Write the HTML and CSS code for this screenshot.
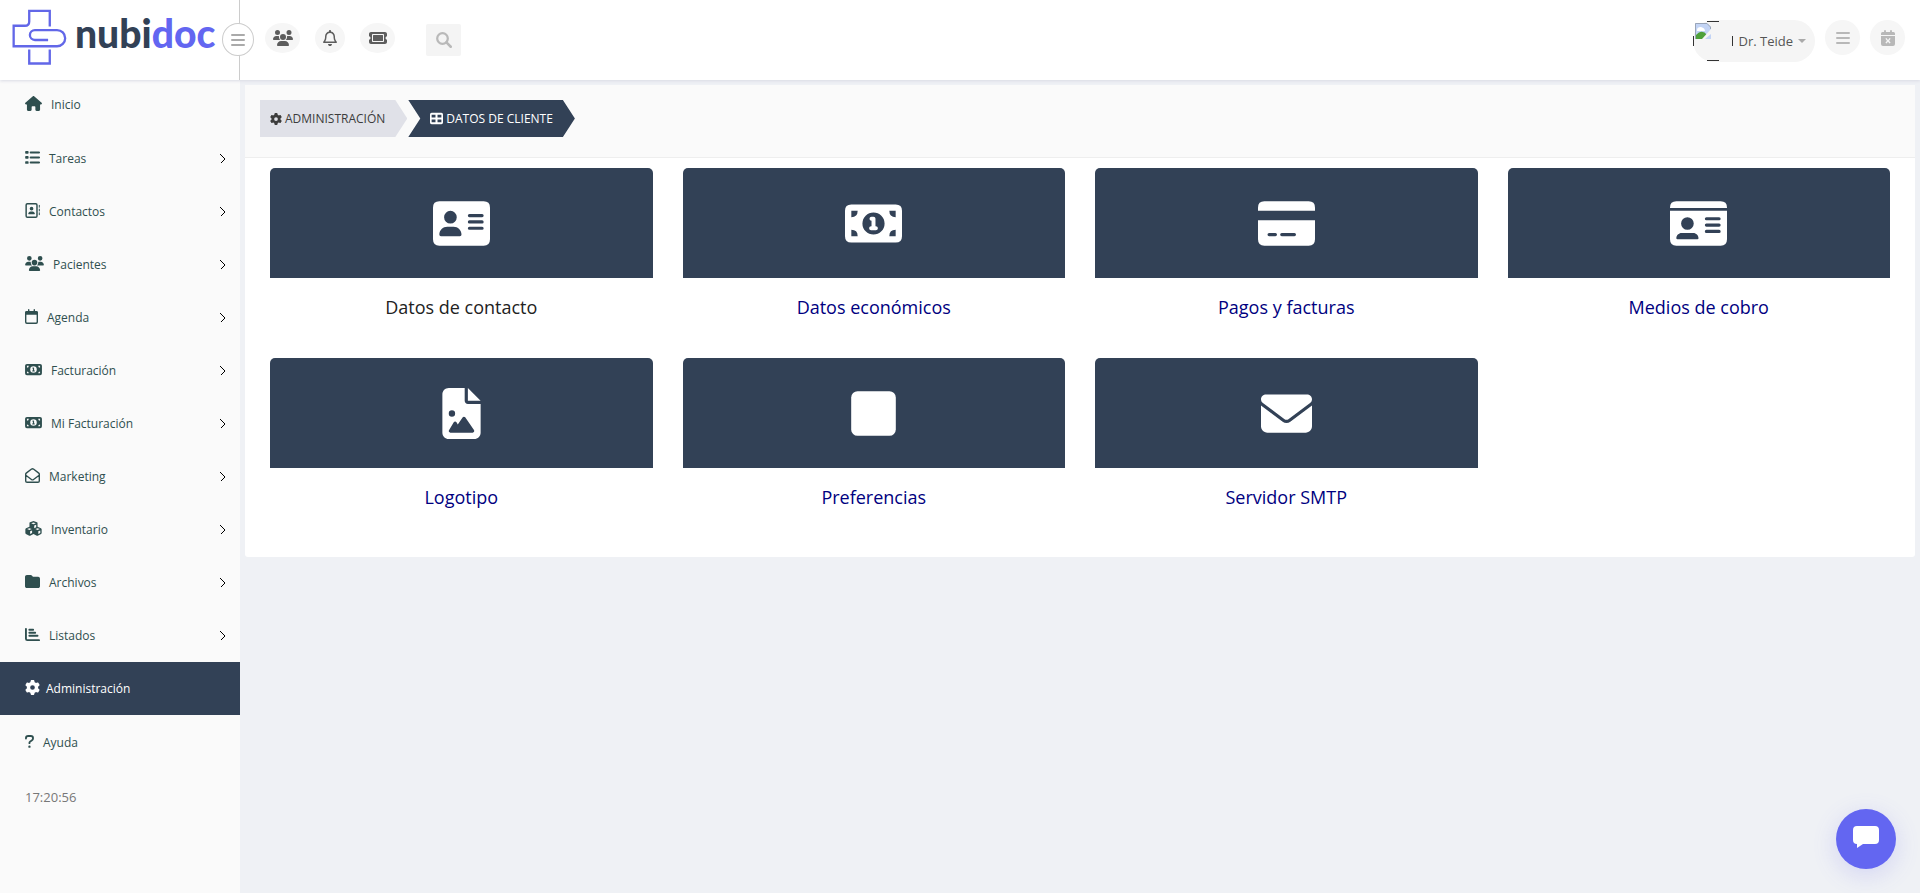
FILE: index.html
```html
<!DOCTYPE html>
<html lang="es">
<head>
<meta charset="utf-8">
<title>nubidoc - Datos de cliente</title>
<link rel="stylesheet" href="styles.css">
</head>
<body>
<svg class="sprite" aria-hidden="true">
  <symbol id="house" viewBox="0 0 576 512"><path d="M575.8 255.5c0 18-15 32.1-32 32.1l-32 0 .7 160.2c0 2.7-.2 5.4-.5 8.1V472c0 22.1-17.9 40-40 40H392c-22.1 0-40-17.9-40-40V384c0-17.7-14.3-32-32-32H256c-17.7 0-32 14.3-32 32v88c0 22.1-17.9 40-40 40H104c-22.1 0-40-17.9-40-40V287.6H32c-18 0-32-14-32-32.1c0-9 3-17 10-24L266.4 8c7-7 15-8 22-8s15 2 21 7L564.8 231.5c8 7 12 15 11 24z"/></symbol>
  <symbol id="list" viewBox="0 0 512 512"><path d="M30 36h68q24 0 24 24v44q0 24-24 24H30q-24 0-24-24V60q0-24 24-24zM30 208h68q24 0 24 24v44q0 24-24 24H30q-24 0-24-24v-44q0-24 24-24zM30 380h68q24 0 24 24v44q0 24-24 24H30q-24 0-24-24v-44q0-24 24-24z"/><path class="line" stroke-width="66" d="M192 84h288M192 256h288M192 428h288"/></symbol>
  <symbol id="book" viewBox="0 0 512 512"><rect class="line" stroke-width="50" x="39" y="25" width="370" height="462" rx="42"/><circle cx="224" cy="192" r="62"/><path d="M112 368c0-44 36-80 80-80h64c44 0 80 36 80 80q0 16-16 16H128q-16 0-16-16z"/><path class="line" stroke-width="34" d="M488 80v64M488 208v64M488 336v64"/></symbol>
  <symbol id="users" viewBox="0 0 640 512"><path d="M144 0a80 80 0 1 1 0 160A80 80 0 1 1 144 0zM512 0a80 80 0 1 1 0 160A80 80 0 1 1 512 0zM0 298.7C0 239.8 47.8 192 106.7 192h42.7c15.9 0 31 3.5 44.6 9.7c-1.3 7.2-1.9 14.7-1.9 22.3c0 38.2 16.8 72.5 43.3 96H21.3C9.6 320 0 310.4 0 298.7zM405.3 320c26.6-23.5 43.3-57.8 43.3-96c0-7.6-.7-15-1.9-22.3c13.6-6.3 28.7-9.7 44.6-9.7h42.7C592.2 192 640 239.8 640 298.7c0 11.8-9.6 21.3-21.3 21.3H405.3zM224 224a96 96 0 1 1 192 0 96 96 0 1 1 -192 0zM128 485.3C128 411.7 187.7 352 261.3 352H378.7C452.3 352 512 411.7 512 485.3c0 14.7-11.9 26.7-26.7 26.7H154.7c-14.7 0-26.7-11.9-26.7-26.7z"/></symbol>
  <symbol id="calendar" viewBox="0 0 448 512"><rect class="line" stroke-width="48" x="24" y="88" width="400" height="400" rx="40"/><path d="M0 192v-64q0-64 64-64h320q64 0 64 64v64z"/><path class="line" stroke-width="48" d="M128 24v64M320 24v64"/></symbol>
  <symbol id="calendar-x" viewBox="0 0 448 512"><path fill-rule="evenodd" d="M0 192h448v256q0 64-64 64H64q-64 0-64-64zM0 160v-48q0-48 48-48h352q48 0 48 48v48zM140 280l50 64-50 64 34 26 50-62 50 62 34-26-50-64 50-64-34-26-50 62-50-62z"/><path class="line" stroke-width="60" d="M128 32v60M320 32v60"/></symbol>
  <symbol id="money" viewBox="0 0 576 512"><path fill-rule="evenodd" d="M64 64h448q64 0 64 64v256q0 64-64 64H64q-64 0-64-64V128q0-64 64-64zM64 192q64 0 64-64H64zM64 320v64h64q0-64-64-64zM512 192v-64h-64q0 64 64 64zM512 320q-64 0-64 64h64zM288 144a112 112 0 1 0 0 224 112 112 0 1 0 0-224z"/><path d="M248 208c0-11 9-20 20-20h20c11 0 20 9 20 20v76h4c11 0 20 9 20 20s-9 20-20 20h-48c-11 0-20-9-20-20s9-20 20-20h4v-56c-11 0-20-9-20-20z"/></symbol>
  <symbol id="open-mail" viewBox="0 0 512 512"><path class="line" stroke-width="48" d="M24 208v232q0 48 48 48h368q48 0 48-48V208q0-20-18-34L288 36q-32-22-64 0L42 174q-18 14-18 34zM28 248l192 144q36 26 72 0l192-144"/></symbol>
  <symbol id="cubes" viewBox="0 0 576 512"><path fill-rule="evenodd" d="M288 0l118 44q20 8 20 28v128l116 44q24 10 24 34v132q0 22-20 32l-112 58q-16 8-32 0l-114-60-114 60q-16 8-32 0L30 442q-20-10-20-32V278q0-24 24-34l116-44V72q0-20 20-28zM288 50l-78 30 78 32 78-32zM312 152v92l68-28v-92zM148 246l-78 30 78 32 78-32zM172 350v92l68-36v-84zM428 246l-78 30 78 32 78-32zM452 350v92l68-36v-84z"/></symbol>
  <symbol id="folder" viewBox="0 0 512 512"><path d="M64 480H448c35 0 64-29 64-64V160c0-35-29-64-64-64H288c-10 0-20-5-26-13L243 58C231 42 212 32 192 32H64C29 32 0 61 0 96V416c0 35 29 64 64 64z"/></symbol>
  <symbol id="chart" viewBox="0 0 512 512"><path class="line" stroke-width="64" d="M32 62v338q0 50 50 50h398M148 92h130M148 196h200M148 300h280"/></symbol>
  <symbol id="gear" viewBox="0 0 512 512"><path d="M495.9 166.6c3.2 8.7 .5 18.4-6.4 24.6l-43.3 39.4c1.1 8.3 1.7 16.8 1.7 25.4s-.6 17.1-1.7 25.4l43.3 39.4c6.9 6.2 9.6 15.9 6.4 24.6c-4.4 11.9-9.7 23.3-15.8 34.3l-4.7 8.1c-6.6 11-14 21.4-22.1 31.2c-5.9 7.2-15.7 9.6-24.5 6.8l-55.7-17.7c-13.4 10.3-28.2 18.9-44 25.4l-12.5 57.1c-2 9.1-9 16.3-18.2 17.8c-13.8 2.3-28 3.5-42.5 3.5s-28.7-1.2-42.5-3.5c-9.2-1.5-16.2-8.7-18.2-17.8l-12.5-57.1c-15.8-6.5-30.6-15.1-44-25.4L83.1 425.9c-8.8 2.8-18.6 .3-24.5-6.8c-8.1-9.8-15.5-20.2-22.1-31.2l-4.7-8.1c-6.1-11-11.4-22.4-15.8-34.3c-3.2-8.7-.5-18.4 6.4-24.6l43.3-39.4C64.6 273.1 64 264.6 64 256s.6-17.1 1.7-25.4L22.4 191.2c-6.9-6.2-9.6-15.9-6.4-24.6c4.4-11.9 9.7-23.3 15.8-34.3l4.7-8.1c6.6-11 14-21.4 22.1-31.2c5.9-7.2 15.7-9.6 24.5-6.8l55.7 17.7c13.4-10.3 28.2-18.9 44-25.4l12.5-57.1c2-9.1 9-16.3 18.2-17.8C227.3 1.2 241.5 0 256 0s28.7 1.2 42.5 3.5c9.2 1.5 16.2 8.7 18.2 17.8l12.5 57.1c15.8 6.5 30.6 15.1 44 25.4l55.7-17.7c8.8-2.8 18.6-.3 24.5 6.8c8.1 9.8 15.5 20.2 22.1 31.2l4.7 8.1c6.1 11 11.4 22.4 15.8 34.3zM256 336a80 80 0 1 0 0-160 80 80 0 1 0 0 160z"/></symbol>
  <symbol id="question" viewBox="0 0 320 512"><path class="line" stroke-width="66" d="M34 150v-10q0-80 80-80h90q82 0 82 84 0 50-46 78l-54 32q-28 18-28 46v14"/><circle cx="158" cy="440" r="42"/></symbol>
  <symbol id="bell" viewBox="0 0 448 512"><path d="M224 0c-17.7 0-32 14.3-32 32V51.2C119 66 64 130.6 64 208v25.4c0 45.4-15.5 89.5-43.8 124.9L5.3 377c-5.8 7.2-6.9 17.1-2.9 25.4S14.8 416 24 416H424c9.2 0 17.6-5.3 21.6-13.6s2.9-18.2-2.9-25.4l-14.9-18.6C399.5 322.9 384 278.8 384 233.4V208c0-77.4-55-142-128-156.8V32c0-17.7-14.3-32-32-32zm0 96c61.9 0 112 50.1 112 112v25.4c0 47.9 13.9 94.6 39.7 134.6H72.3C98.1 328 112 281.3 112 233.4V208c0-61.9 50.1-112 112-112zm64 352H160c0 17 6.7 33.3 18.7 45.3s28.3 18.7 45.3 18.7s33.3-6.7 45.3-18.7s18.7-28.3 18.7-45.3z"/></symbol>
  <symbol id="ticket" viewBox="0 0 576 512"><path fill-rule="evenodd" d="M64 64C28.7 64 0 92.7 0 128v64c0 8.8 7.4 15.7 15.7 18.6C34.5 217.1 48 235 48 256s-13.5 38.9-32.3 45.4C7.4 304.3 0 311.2 0 320v64c0 35.3 28.7 64 64 64H512c35.3 0 64-28.7 64-64V320c0-8.800-7.400-15.700-15.700-18.600C541.500 294.900 528 277 528 256s13.500-38.900 32.300-45.400c8.300-2.900 15.700-9.800 15.700-18.600V128c0-35.300-28.700-64-64-64H64zM96 160c0-17.700 14.300-32 32-32H448c17.700 0 32 14.300 32 32V352c0 17.700-14.300 32-32 32H128c-17.700 0-32-14.300-32-32zM144 160q-16 0-16 16v160q0 16 16 16h288q16 0 16-16V176q0-16-16-16z"/></symbol>
  <symbol id="search" viewBox="0 0 512 512"><circle class="line" stroke-width="72" cx="208" cy="208" r="170"/><path class="line" stroke-width="80" d="M334 334l138 138"/></symbol>
  <symbol id="bars" viewBox="0 0 448 512"><path class="line" stroke-width="64" d="M32 96h384M32 256h384M32 416h384"/></symbol>
  <symbol id="table" viewBox="0 0 512 512"><path fill-rule="evenodd" d="M64 32h384q64 0 64 64v320q0 64-64 64H64q-64 0-64-64V96q0-64 64-64zM64 106v108h152V106zM296 106v108h152V106zM64 298v108h152V298zM296 298v108h152V298z"/></symbol>
  <symbol id="contact-card" viewBox="0 0 576 512"><path fill-rule="evenodd" d="M64 32h448q64 0 64 64v320q0 64-64 64H64q-64 0-64-64V96q0-64 64-64zM176 128a64 64 0 1 0 0 128 64 64 0 1 0 0-128zM64 368q0 16 16 16h192q16 0 16-16c0-44-36-80-80-80h-64c-44 0-80 36-80 80zM368 160a16 16 0 1 0 0 32h128a16 16 0 1 0 0-32zM368 224a16 16 0 1 0 0 32h128a16 16 0 1 0 0-32zM368 288a16 16 0 1 0 0 32h128a16 16 0 1 0 0-32z"/></symbol>
  <symbol id="id-card" viewBox="0 0 576 512"><path fill-rule="evenodd" d="M0 96q0-64 64-64h448q64 0 64 64v4H0zM0 128h576v288q0 64-64 64H64q-64 0-64-64zM176 192a64 64 0 1 0 0 128 64 64 0 1 0 0-128zM64 405q0 11 11 11h202q11 0 11-11c0-29-24-53-53-53H117c-29 0-53 24-53 53zM368 192a16 16 0 1 0 0 32h128a16 16 0 1 0 0-32zM368 256a16 16 0 1 0 0 32h128a16 16 0 1 0 0-32zM368 320a16 16 0 1 0 0 32h128a16 16 0 1 0 0-32z"/></symbol>
  <symbol id="credit" viewBox="0 0 576 512"><path fill-rule="evenodd" d="M0 128V96q0-64 64-64h448q64 0 64 64v32zM0 224h576v192q0 64-64 64H64q-64 0-64-64zM112 352a16 16 0 1 0 0 32h64a16 16 0 1 0 0-32zM240 352a16 16 0 1 0 0 32h128a16 16 0 1 0 0-32z"/></symbol>
  <symbol id="file-image" viewBox="0 0 384 512"><path d="M64 0C28.7 0 0 28.7 0 64V448c0 35.3 28.7 64 64 64H320c35.3 0 64-28.7 64-64V160H256c-17.7 0-32-14.3-32-32V0H64zM256 0V128H384L256 0zM64 256a32 32 0 1 1 64 0 32 32 0 1 1 -64 0zm152 32c5.3 0 10.2 2.6 13.2 6.9l88 128c3.4 4.9 3.7 11.3 1 16.5s-8.2 8.6-14.2 8.6H80c-5.8 0-11.1-3.1-13.9-8.1s-2.8-11.2 .2-16.1l48-80c2.9-4.8 8.1-7.8 13.7-7.8s10.8 2.9 13.7 7.8l12.8 21.4 48.3-70.2c3-4.3 7.9-6.9 13.2-6.9z"/></symbol>
  <symbol id="square" viewBox="0 0 448 512"><rect y="32" width="448" height="448" rx="64"/></symbol>
  <symbol id="envelope" viewBox="0 0 512 512"><path d="M48 64C21.5 64 0 85.5 0 112c0 15.1 7.1 29.3 19.2 38.4L236.8 313.6c11.4 8.5 27 8.5 38.4 0L492.8 150.4c12.1-9.1 19.2-23.3 19.2-38.4c0-26.5-21.5-48-48-48H48zM0 176V384c0 35.3 28.7 64 64 64H448c35.3 0 64-28.7 64-64V176L294.4 339.2c-22.8 17.1-54 17.1-76.8 0L0 176z"/></symbol>
  <symbol id="chevron" viewBox="0 0 6 10"><path class="line chevron-line" d="M.5 .5L5 5L.5 9.5"/></symbol>
</svg>

<header class="topbar">
  <div class="brand">
    <a class="logo" href="#" aria-label="nubidoc">
      <svg class="logo-mark" viewBox="36 28 166 168" aria-hidden="true"><path d="M150 80V33H88V65Q88 78 75 78H41V140H172A24.500 24.500 0 0 0 172 91H105A15 15 0 0 0 105 121H145M88 150V192H150V150"/></svg>
      <span class="logo-text">nubi<span class="logo-accent">doc</span></span>
    </a>
    <button class="toggle" type="button" aria-label="Menú"><svg class="w14"><use href="#bars"/></svg></button>
  </div>
  <nav class="tools" aria-label="Accesos">
    <button class="round wide" type="button" aria-label="Pacientes"><svg class="w20"><use href="#users"/></svg></button>
    <button class="round" type="button" aria-label="Avisos"><svg class="w14"><use href="#bell"/></svg></button>
    <button class="round wide" type="button" aria-label="Tickets"><svg class="w18"><use href="#ticket"/></svg></button>
    <button class="search" type="button" aria-label="Buscar"><svg class="w16"><use href="#search"/></svg></button>
  </nav>
  <div class="account">
    <button class="user" type="button">
      <svg class="avatar" viewBox="0 0 40 42" aria-hidden="true"><path fill="#c3d4f5" d="M2 3h12l4 4v12H2z"/><path fill="#fff" d="M4 10q0-3 4-3 4 1 4 4H4z"/><path fill="#4fa13b" d="M2 19v-3q7-8 12-1l-3 4z"/><path fill="#f5f5f5" d="M18 9v5l-6 5H9z"/><path fill="none" stroke="#9aa5b8" d="M2.500 19V3.500H14L17.500 7v2"/><path stroke="#333" d="M14 1.500h12M14 40.500h12M.5 16v10M39.500 16v10"/></svg>
      <span>Dr. Teide</span>
      <span class="caret"></span>
    </button>
    <button class="round big" type="button" aria-label="Opciones"><svg class="w14"><use href="#bars"/></svg></button>
    <button class="round big" type="button" aria-label="Citas anuladas"><svg class="w14"><use href="#calendar-x"/></svg></button>
  </div>
</header>

<div class="layout">
  <aside class="sidebar">
    <nav class="menu" aria-label="Principal">
      <a class="item" href="#"><svg class="w17"><use href="#house"/></svg>Inicio</a>
      <a class="item" href="#"><svg class="w15"><use href="#list"/></svg>Tareas<svg class="chevron"><use href="#chevron"/></svg></a>
      <a class="item" href="#"><svg class="w15"><use href="#book"/></svg>Contactos<svg class="chevron"><use href="#chevron"/></svg></a>
      <a class="item" href="#"><svg class="w19"><use href="#users"/></svg>Pacientes<svg class="chevron"><use href="#chevron"/></svg></a>
      <a class="item" href="#"><svg class="w13"><use href="#calendar"/></svg>Agenda<svg class="chevron"><use href="#chevron"/></svg></a>
      <a class="item" href="#"><svg class="w17"><use href="#money"/></svg>Facturación<svg class="chevron"><use href="#chevron"/></svg></a>
      <a class="item" href="#"><svg class="w17"><use href="#money"/></svg>Mi Facturación<svg class="chevron"><use href="#chevron"/></svg></a>
      <a class="item" href="#"><svg class="w15"><use href="#open-mail"/></svg>Marketing<svg class="chevron"><use href="#chevron"/></svg></a>
      <a class="item" href="#"><svg class="w17"><use href="#cubes"/></svg>Inventario<svg class="chevron"><use href="#chevron"/></svg></a>
      <a class="item" href="#"><svg class="w15"><use href="#folder"/></svg>Archivos<svg class="chevron"><use href="#chevron"/></svg></a>
      <a class="item" href="#"><svg class="w15"><use href="#chart"/></svg>Listados<svg class="chevron"><use href="#chevron"/></svg></a>
      <a class="item active" href="#" aria-current="page"><svg class="w15"><use href="#gear"/></svg>Administración</a>
      <a class="item" href="#"><svg class="w9"><use href="#question"/></svg>Ayuda</a>
    </nav>
    <div class="clock">17:20:56</div>
  </aside>

  <main class="content">
    <section class="panel">
      <nav class="crumbs" aria-label="Ruta">
        <a class="crumb" href="#"><svg class="w12"><use href="#gear"/></svg>ADMINISTRACIÓN</a>
        <a class="crumb current" href="#" aria-current="page"><svg class="w13 h13"><use href="#table"/></svg>DATOS DE CLIENTE</a>
      </nav>
      <div class="tiles">
        <a class="tile selected" href="#"><span class="tile-icon"><svg><use href="#contact-card"/></svg></span><span class="tile-name">Datos de contacto</span></a>
        <a class="tile" href="#"><span class="tile-icon"><svg><use href="#money"/></svg></span><span class="tile-name">Datos económicos</span></a>
        <a class="tile" href="#"><span class="tile-icon"><svg><use href="#credit"/></svg></span><span class="tile-name">Pagos y facturas</span></a>
        <a class="tile" href="#"><span class="tile-icon"><svg><use href="#id-card"/></svg></span><span class="tile-name">Medios de cobro</span></a>
        <a class="tile" href="#"><span class="tile-icon"><svg><use href="#file-image"/></svg></span><span class="tile-name">Logotipo</span></a>
        <a class="tile" href="#"><span class="tile-icon"><svg><use href="#square"/></svg></span><span class="tile-name">Preferencias</span></a>
        <a class="tile" href="#"><span class="tile-icon"><svg><use href="#envelope"/></svg></span><span class="tile-name">Servidor SMTP</span></a>
      </div>
    </section>
  </main>
</div>

<button class="chat" type="button" aria-label="Chat"><svg viewBox="0 0 26 24" aria-hidden="true"><path d="M4 1h18q4 0 4 4v10q0 4-4 4H10l-6 4v-4q-4 0-4-4V5q0-4 4-4z"/></svg></button>
</body>
</html>
```
FILE: styles.css
```css
* { box-sizing: border-box; }

body {
  margin: 0;
  min-height: 100vh;
  display: flex;
  flex-direction: column;
  background: #eff1f5;
  color: #2f4f4f;
  font-family: "Open Sans", "Noto Sans", sans-serif;
  font-size: 12px;
}

button {
  border: 0;
  padding: 0;
  font: inherit;
  color: inherit;
  cursor: pointer;
}

a { color: inherit; text-decoration: none; }
svg { fill: currentColor; flex: none; display: block; }
.sprite { position: absolute; width: 0; height: 0; }
.line {
  fill: none;
  stroke: currentColor;
  stroke-linecap: round;
  stroke-linejoin: round;
}
.chevron-line { stroke-linecap: butt; shape-rendering: crispEdges; }

.w9 { width: 9px; height: 15px; }
.w12 { width: 12px; height: 12px; }
.w13 { width: 13px; height: 15px; }
.h13 { height: 13px; }
.w14 { width: 14px; height: 16px; }
.w15 { width: 15px; height: 15px; }
.w16 { width: 16px; height: 16px; }
.w17 { width: 17px; height: 15px; }
.w18 { width: 18px; height: 16px; }
.w19 { width: 19px; height: 15px; }
.w20 { width: 20px; height: 16px; }

/* Top bar */
.topbar {
  position: relative;
  z-index: 1;
  display: flex;
  height: 80px;
  background: #fff;
  box-shadow: 0 1px 3px #d9dae4;
}
.brand {
  position: relative;
  width: 240px;
  padding: 9px 0 0 12px;
  border-right: 1px solid #ccc;
}
.logo { display: flex; gap: 8px; }
.logo-mark {
  width: 55px;
  height: 56px;
  fill: none;
  stroke: #6267e8;
  stroke-width: 7;
}
.logo-text {
  padding-top: 4px;
  color: #324156;
  font: 900 39px/40px Lato, sans-serif;
}
.logo-accent { color: #6366f1; }
.toggle {
  position: absolute;
  top: 23px;
  right: -15px;
  width: 32px;
  height: 33px;
  display: grid;
  place-items: center;
  border: 1px solid #ccc;
  border-radius: 50%;
  background: #fff;
  color: #aaa;
}
.tools {
  display: flex;
  gap: 15px;
  padding: 23px 0 0 25px;
  color: #5d5d5d;
}
.round {
  width: 30px;
  height: 30px;
  display: grid;
  place-items: center;
  border-radius: 50%;
  background: #f6f6f6;
}
.wide { width: 35px; }
.big { width: 35px; height: 35px; color: #b8b8b8; }
.search {
  width: 35px;
  height: 32px;
  margin: 1px 0 0 16px;
  display: grid;
  place-items: center;
  border-radius: 2px;
  background: #f4f4f4;
  color: #b9b9b9;
}
.account {
  display: flex;
  align-items: flex-start;
  gap: 10px;
  margin-left: auto;
  padding: 20px 15px 0 0;
}
.user {
  display: flex;
  align-items: center;
  gap: 5px;
  padding-right: 9px;
  border-radius: 21px;
  background: #f5f5f5;
  color: #555;
  font-size: 13px;
}
.avatar { width: 40px; height: 42px; }
.caret {
  border: 4px solid transparent;
  border-top-color: #aaa;
  border-bottom: 0;
}

/* Side menu */
.layout { display: flex; flex: 1; }
.sidebar { width: 240px; flex: none; background: #fafafa; }
.item {
  display: flex;
  align-items: center;
  gap: 9px;
  height: 53px;
  padding: 0 14px 0 25px;
}
.item svg:first-child { margin-bottom: 2px; }
.item:first-child { height: 52px; padding-bottom: 3px; }
.item:last-child { height: 54px; }
.chevron { width: 6px; height: 10px; margin-left: auto; color: #000; }
.active { gap: 6px; background: #324156; color: #fff; }
.clock {
  padding: 19px 25px;
  color: #777;
  font-size: 13px;
  line-height: 18px;
}

/* Main panel */
.content { flex: 1; padding: 5px; }
.panel { background: #fff; border-radius: 3px; }
.crumbs {
  display: flex;
  gap: 1px;
  padding: 15px 15px 20px;
  border-bottom: 1px solid #eee;
  background: #fafafa;
}
.crumb {
  display: flex;
  align-items: center;
  gap: 3px;
  height: 37px;
  padding: 0 22px 0 10px;
  background: #e0e1e8;
  color: #3c3c3c;
  clip-path: polygon(0 0, calc(100% - 12px) 0, 100% 50%, calc(100% - 12px) 100%, 0 100%);
}
.current {
  padding-left: 22px;
  background: #324156;
  color: #fff;
  clip-path: polygon(0 0, calc(100% - 12px) 0, 100% 50%, calc(100% - 12px) 100%, 0 100%, 12px 50%);
}
.tiles {
  display: grid;
  grid-template-columns: repeat(4, 1fr);
  gap: 38px 30px;
  padding: 10px 25px 47px;
}
.tile { color: #000080; text-align: center; }
.selected { color: #222; }
.tile-icon {
  display: grid;
  place-items: center;
  height: 110px;
  border-radius: 5px 5px 0 0;
  background: #324156;
  color: #fff;
}
.tile-icon svg { width: 57px; height: 51px; }
.tile-name {
  display: block;
  padding-top: 16px;
  font-size: 18px;
  line-height: 26px;
}

/* Chat launcher */
.chat {
  position: fixed;
  right: 24px;
  bottom: 24px;
  width: 60px;
  height: 60px;
  display: grid;
  place-items: center;
  border-radius: 50%;
  background: #6366f1;
  color: #fff;
  box-shadow: 0 6px 24px #6366f133;
}
.chat svg { width: 26px; height: 24px; margin-bottom: 4px; }
```
